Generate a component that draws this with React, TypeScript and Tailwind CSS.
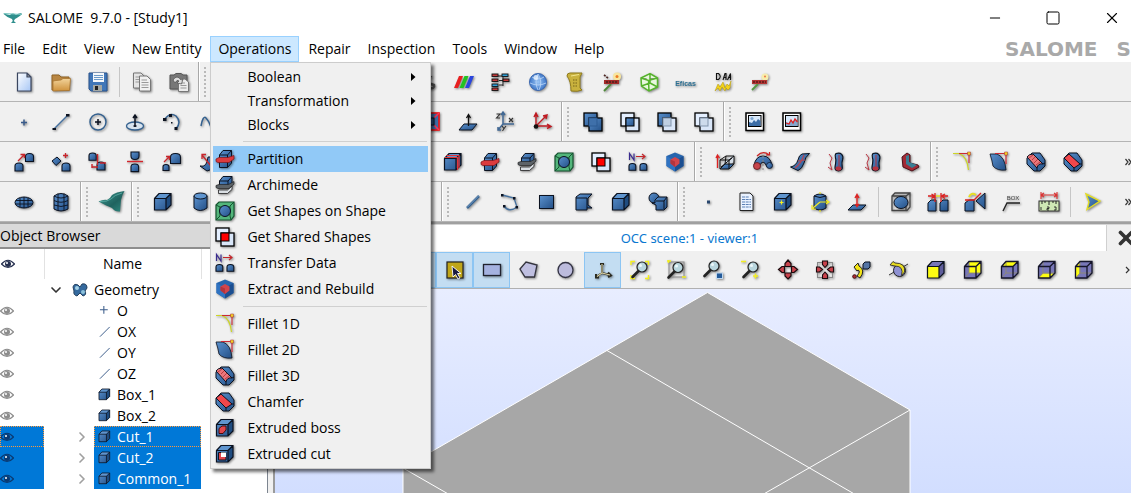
import type { ReactNode } from "react";
import { ChevronDown, ChevronRight, Minus, Square, X } from "lucide-react";

const BLUE = "url(#blue)";
const K = "#0b1220";

function Glass({ x = 12, y = 7 }: { x?: number; y?: number }) {
  return (
    <>
      <path d={`M${x - 3.5} ${y + 4}L${x - 9.5} ${y + 10}`} stroke="#222" strokeWidth="2.6" strokeLinecap="round" />
      <circle cx={x} cy={y} r="5" fill="#b9d6de" stroke="#222" strokeWidth="1.2" />
      <circle cx={x - 1.5} cy={y - 1.5} r="1.5" fill="#eef8fa" />
    </>
  );
}

function Cube({ front = BLUE, top = "#5f95cf", side = "#1f4c80" }: { front?: string; top?: string; side?: string }) {
  return (
    <>
      <path d="M1.5 6.5L6 1.5H18V13L13 18H1.5Z" fill={front} />
      <path d="M1.5 6.5L6 1.5H18L13 6.5Z" fill={top} />
      <path d="M13 6.5L18 1.5V13L13 18Z" fill={side} />
      <path d="M1.5 6.5L6 1.5H18V13L13 18H1.5ZM1.5 6.5H13V18M13 6.5L18 1.5" fill="none" stroke={K} strokeWidth="1.2" />
    </>
  );
}

function Wire({ children }: { children: ReactNode }) {
  return (
    <>
      <path d="M1.5 6.5L6 1.5H18V13L13 18H1.5Z" fill="#7877b8" />
      {children}
      <path d="M6 1.5V13H18M6 13L1.5 18" fill="none" stroke="#8f8b70" strokeWidth=".9" />
      <path d="M1.5 6.5L6 1.5H18V13L13 18H1.5ZM1.5 6.5H13V18M13 6.5L18 1.5" fill="none" stroke="#15152a" strokeWidth="1.3" />
    </>
  );
}

function Squares({ back, front, mid, rim }: { back: string; front: string; mid: string; rim: string }) {
  return (
    <>
      <rect x="1" y="1" width="13" height="13" fill={back} stroke="#000" strokeWidth="1.3" />
      <rect x="6" y="6" width="13" height="13" fill={front} stroke="#000" strokeWidth="1.3" />
      <rect x="6" y="6" width="8" height="8" fill={mid} stroke={rim} strokeWidth="1" />
    </>
  );
}

function Knob({ x, y, s = 1 }: { x: number; y: number; s?: number }) {
  return <path d={`M${x} ${y + 8 * s}V${y + 3 * s}Q${x} ${y} ${x + 4 * s} ${y}Q${x + 8 * s} ${y} ${x + 8 * s} ${y + 3 * s}V${y + 8 * s}Z`} fill={BLUE} stroke={K} strokeWidth="1.1" />;
}

function Pipe() {
  return (
    <>
      <path d="M9 1.5C14 0 17 3 15.500 8C14 12 16 14 15 17C13 20 8 19 8 16C8 12 10 9 8.500 6Q7.500 3 9 1.500Z" fill={BLUE} stroke={K} strokeWidth="1.2" />
      <ellipse cx="11.500" cy="16.500" rx="2.900" ry="2.200" fill="#b83340" />
      <path d="M12 3V14M2 2L5 6L3 11L5 18M1 15L5 18" stroke="#b83340" fill="none" />
    </>
  );
}

const icons: Record<string, ReactNode> = {
  new: <path d="M3.500 1H13L17 5V19H3.500ZM13 1V5H17" fill="url(#page)" stroke="#3a4660" strokeWidth="1.200" />,
  open: (
    <>
      <path d="M1 3H8L10 5H18V18H1Z" fill="#b88642" stroke="#8f6325" />
      <path d="M2 19V9L5 8.500L10 8L12 6.500H19.500L18.500 18.500Z" fill="url(#folder)" stroke="#a87530" strokeWidth=".8" />
    </>
  ),
  save: (
    <>
      <path d="M1 1H19V19H3L1 17Z" fill="#4177b8" stroke="#28538c" />
      <path d="M5 1H16V10H5Z" fill="#f5f8fb" />
      <path d="M6 3.500H15M6 5.500H15M6 7.500H15" stroke="#6c9ac8" />
      <path d="M5 13H14V19H5Z" fill="#a4a8a4" />
      <path d="M7 14H10V18H7Z" fill="#222" />
    </>
  ),
  copy: (
    <>
      <path d="M1.500 1H9L12 4V16H1.500Z" fill="#e4e4e4" stroke="#777" />
      <path d="M3.500 5H8M3.500 7.500H7M3.500 10H7" stroke="#999" />
      <path d="M7.500 4H15L18.500 7.500V19H7.500Z" fill="#f1f1f1" stroke="#777" />
      <path d="M9.500 8H15M9.500 10.500H16.500M9.500 13H16.500M9.500 15.500H16.500" stroke="#999" />
    </>
  ),
  paste: (
    <>
      <path d="M1 3H5L7 1.500H12L14 3H18V17H1Z" fill="#777" stroke="#555" />
      <path d="M9.500 7H16L19.500 10V19.500H9.500Z" fill="#ececec" stroke="#777" />
      <path d="M11.500 11H16M11.500 13.500H17.500M11.500 16H17.500" stroke="#999" />
      <path d="M4 8Q8 2 12 8L14 7L12.500 12L8 11L10 9Q8 7 6 11Z" fill="#ddd" stroke="#555" strokeWidth=".8" />
    </>
  ),
  dots: <path d="M5 3L13 5L8 10L17 13Q18 17 12 16" fill="none" stroke="#555" strokeWidth="2.500" />,
  rgb: (
    <>
      <path d="M5 4H9L4 16H0Z" fill="#e82020" />
      <path d="M10.500 4H14.500L9.500 16H5.500Z" fill="#21c321" />
      <path d="M16 4H20L15 16H11Z" fill="#2a45dd" />
    </>
  ),
  blocks: (
    <>
      <path d="M7 4H12V14M8 8.500H12M8 13H12" stroke="#222" fill="none" />
      {[[1, 2, 0], [11, 2, 1], [1, 7, 0], [12, 7, 0], [1, 12, 1], [1, 16, 0]].map(([x, y, b]) => (
        <rect key={`${x}-${y}`} x={x} y={y} width="6" height="2.5" fill={b ? "#2f9fd8" : "#c43a3a"} stroke="#111" strokeWidth=".9" />
      ))}
    </>
  ),
  globe: (
    <>
      <circle cx="10" cy="10" r="8.500" fill="url(#globe)" stroke="#3c68b0" />
      <path d="M4 5Q10 9 16 5M2 11Q10 15 18 11M10 2Q6 10 10 18M10 2Q15 10 11 18" stroke="#bcd7f7" fill="none" strokeWidth=".8" />
      <circle cx="8" cy="5.500" r="2.500" fill="#eaf4ff" opacity=".8" />
    </>
  ),
  scroll: (
    <>
      <path d="M2 4Q2 1 5 1H17L15 5V16L17 18Q13 20 6 19Q6 9 2 4Z" fill="#c9b23e" stroke="#8f7a1c" />
      <path d="M6 4L14 2.500" stroke="#f1e58c" />
      <path d="M8 8H13M8 11H13M8 14H13" stroke="#77651a" strokeDasharray="1.500 1" />
    </>
  ),
  yacs: (
    <>
      <path d="M2 19L9 12" stroke="#4e8a3a" strokeWidth="2" />
      <circle cx="15" cy="4.500" r="4" fill="#f8e6a0" />
      <circle cx="15" cy="4.500" r="1.500" fill="#ee7c26" />
      <path d="M2 8H17V12H2Z" fill="#a32a28" />
      <path d="M2 3L6 6M4 10H15" stroke="#4a2320" strokeDasharray="2 1" strokeWidth="1.600" />
    </>
  ),
  hexa: <path d="M2 6L11 1.500L18.500 6V15L10 19L2.500 14ZM2 6L9.500 8.500L18.500 6M9.500 8.500L10 19M11 1.500V11L2.500 14M11 11L18.500 15" fill="#e9f7df" stroke="#56b32c" strokeWidth="1.500" />,
  eficas: (
    <text x="9.5" y="14" textAnchor="middle" fill="#2b6f92" className="font-['Liberation_Sans_Narrow','Liberation_Sans',sans-serif] text-[7px] font-bold">
      Eficas
    </text>
  ),
  da: (
    <>
      <path d="M3.500 1.500H5.500Q9 4.500 5.500 7.500H3.500ZM10 8L12 1.500H13V8M10.500 5.500H13M14.500 8L17.500 1.500V8M15.500 5.500H17.500" fill="none" stroke="#111" strokeWidth="1.100" />
      <path d="M2 19L5 12L7 15L10 10L12 16L14 12L16 14L18 9L17 16L15 18L13 16L12 19L9 15L7 19L5 16Z" fill="#f3d21b" stroke="#b59a08" strokeWidth=".5" />
    </>
  ),
  adao: (
    <>
      <path d="M2 18L8 12" stroke="#559a44" strokeWidth="2" />
      <circle cx="15" cy="5" r="3.500" fill="#f7edac" />
      <circle cx="15" cy="4.500" r="1" fill="#e74" />
      <path d="M2 8H17V12H2Z" fill="#b23432" />
      <path d="M3 10H16" stroke="#5a1b1a" strokeWidth="1.500" strokeDasharray="2 1" />
    </>
  ),
  point: <path d="M10 7.500V13.500M7 10.500H13" stroke="#395b8b" strokeWidth="1.500" />,
  line: (
    <>
      <path d="M3 17L17 3" stroke="#44709f" strokeWidth="1.500" />
      <path d="M1.500 16H5V18H1.500ZM15 2H18.500V4.500H15Z" fill={K} />
    </>
  ),
  circle: (
    <>
      <circle cx="10" cy="10" r="8" fill="none" stroke="#33608f" strokeWidth="1.500" />
      <path d="M10 7V13M7 10H13" stroke={K} strokeWidth="1.500" />
    </>
  ),
  ellipse: (
    <>
      <ellipse cx="10" cy="14" rx="8.500" ry="4" fill="#d7e3ef" stroke="#33608f" strokeWidth="1.300" />
      <path d="M10 15V3M8 6L10 3L12 6M8.500 14H11.500" fill="none" stroke={K} strokeWidth="1.500" />
    </>
  ),
  arc: (
    <>
      <path d="M3 7Q8 0 14 4Q20 10 14 17" fill="none" stroke="#33608f" strokeWidth="1.500" />
      <path d="M1 6H4.500V9H1ZM7 2H10V5H7ZM12.500 15H15.500V18H12.500ZM9 10H10.500V11.500H9Z" fill={K} />
    </>
  ),
  curve: <path d="M2 14Q4 3 7 6T12 15Q16 18 18 3" fill="none" stroke="#33608f" strokeWidth="1.500" />,
  redbox: (
    <>
      <rect x="1" y="1" width="17" height="17" fill="#3e6fa8" stroke="#e11" strokeWidth="1.600" />
      <path d="M1 1L6 6M18 1L13 6M1 18L6 13M18 18L13 13" stroke="#f35" strokeWidth="1.500" />
      <rect x="6" y="6" width="7" height="7" fill="#2d588a" stroke={K} />
    </>
  ),
  plane: (
    <>
      <path d="M1 18L6 12H19L14 18Z" fill={BLUE} stroke={K} />
      <path d="M10.500 14V3M8.500 6L10.500 2.500L12.500 6" fill="none" stroke="#111" strokeWidth="1.300" />
    </>
  ),
  axes: (
    <>
      <path d="M8 12V1M8 12H19M8 12L3 18M6 3L8 0L10 3M3 15L3 18H6" fill="none" stroke="#416894" strokeWidth="1.500" />
      <path d="M1.500 2H5L1.500 6H5M14 6L18 10M18 6L14 10M7 14L9 16.500L11 14M9 16.500L7.500 19" fill="none" stroke="#333" strokeWidth="1.100" />
    </>
  ),
  redaxes: (
    <>
      <path d="M4 14V2M4 14L14 4M4 14H18M2 5L4 1L6 5M11 4L15 3L14 7M15 12L19 14.500L15 16.500" fill="none" stroke="#c01820" strokeWidth="1.400" />
      <circle cx="4" cy="14.500" r="2.300" fill="#111" />
    </>
  ),
  fuse: <Squares back={BLUE} front={BLUE} mid="#3f70aa" rim="#2c5a92" />,
  common: <Squares back="#e4efff" front="#d9e6f8" mid={BLUE} rim="#000" />,
  cut: <Squares back={BLUE} front="#d9e6f8" mid="#bfcfe2" rim="#8295ad" />,
  section: <Squares back="#e4efff" front="#d9e6f8" mid="#cddbec" rim="#8295ad" />,
  shared: <Squares back="#e4efff" front="#d9e6f8" mid="#f00" rim="#000" />,
  image: (
    <>
      <rect x="1" y="1" width="17.500" height="17.500" fill="#fff" stroke="#000" strokeWidth="1.500" />
      <rect x="3.500" y="3.500" width="12.500" height="11" fill="#d7e8fa" stroke="#000" />
      <path d="M4 14V10L7 11L9 8L11 10L13 7L15.500 9V14Z" fill="#3c6da6" />
      <circle cx="7" cy="6.500" r="1.600" fill="#7ea6d0" />
    </>
  ),
  imagered: (
    <>
      <rect x="1" y="1" width="17.500" height="17.500" fill="#fff" stroke="#000" strokeWidth="1.500" />
      <rect x="3.500" y="3.500" width="12.500" height="11" fill="#d7e8fa" stroke="#000" />
      <path d="M4 14V10L7 11L9 8L11 10L13 7L15.500 9V14Z" fill="#84a7cd" />
      <path d="M4 11L7 12L9 8L11 11L13 7L15.500 10" fill="none" stroke="#d22" strokeWidth="1.300" />
    </>
  ),
  translate: (
    <>
      <Knob x={1} y={11} />
      <Knob x={11.5} y={1.5} />
      <path d="M4 9L10 3M6.500 2.500H10.500V6" fill="none" stroke="#c9252b" strokeWidth="1.300" />
    </>
  ),
  rotate: (
    <>
      <path d="M1 9L6 5L10 9L5 13.500Z" fill={BLUE} stroke={K} />
      <Knob x={11} y={11} />
      <path d="M14.500 1V6M12 3.500H17" stroke="#c9252b" strokeWidth="1.300" />
    </>
  ),
  location: (
    <>
      <Knob x={1} y={1} s={0.9} />
      <Knob x={9} y={10} />
      <path d="M9.500 2V13M4 15H10M12 11L18 11M4 12V16" fill="none" stroke="#c9252b" strokeWidth="1.400" />
    </>
  ),
  mirror: (
    <>
      <path d="M6 0H14V4Q14 7.500 10 7.500Q6 7.500 6 4Z" fill={BLUE} stroke={K} strokeWidth="1.100" />
      <Knob x={6} y={12} s={0.95} />
      <path d="M2 9.500H18" stroke="#d3242b" strokeWidth="1.400" />
    </>
  ),
  scale: (
    <>
      <Knob x={1} y={12.5} s={0.75} />
      <Knob x={8.5} y={1.5} s={1.25} />
      <path d="M2 10L7 5M4 4.500H7.500V8" fill="none" stroke="#c9252b" strokeWidth="1.300" />
    </>
  ),
  offset: (
    <>
      <path d="M1 14Q8 16 9 5H18L16 16L8 19Z" fill={BLUE} stroke={K} />
      <path d="M12 14L3 3M3 7V2.500H7" fill="none" stroke="#c9252b" strokeWidth="1.300" />
    </>
  ),
  explode: (
    <>
      <Cube />
      <path d="M2 5.500H14.500V18M3.500 3.500H16V16" fill="none" stroke="#e2343a" strokeWidth="1.200" />
    </>
  ),
  partition: (
    <>
      <path d="M4.500 6L8 1.500H16.500V14L12.500 18.500H4.500Z" fill={BLUE} stroke={K} />
      <path d="M4.500 6H12.500L16.500 1.500M12.500 6V18.500" fill="none" stroke={K} />
      <path d="M1 10L4 8.500H13L19 6.500V10L14 13.500H3L1 12.500Z" fill="#dc3b3e" stroke="#7c1418" strokeWidth=".7" />
    </>
  ),
  archimede: (
    <>
      <path d="M3.500 15H12.500L17 11V14.500L12.500 18.500H3.500Z" fill="#d9dee3" stroke="#222" strokeWidth=".8" />
      <path d="M4.500 6L8 1.500H17V9L13 12H4.500Z" fill={BLUE} stroke={K} />
      <path d="M4.500 6H13L17 1.500M13 6V12" fill="none" stroke={K} />
      <path d="M1 10.500L4 9.500H13.500L19 6.500V9L14 13.500H3L1 12.500Z" fill="#5d6368" stroke="#222" strokeWidth=".7" />
    </>
  ),
  onshape: (
    <>
      <path d="M1 4L4 1H19V15L16 19H1Z" fill="#53b57b" stroke="#14532f" strokeWidth="1.200" />
      <path d="M1 4L5 6V15L1 19M19 1L15 5V15L16 19M5 6H15" fill="none" stroke="#14532f" />
      <circle cx="10" cy="10" r="5.500" fill={BLUE} stroke={K} />
    </>
  ),
  transfer: (
    <>
      <path d="M1.500 8V1.500L6 8V1.500" fill="none" stroke="#3a2b8f" strokeWidth="1.200" />
      <path d="M8 4.500H17M14 2L17 4.500L14 7" fill="none" stroke="#c4262b" strokeWidth="1.200" />
      <Knob x={1} y={11.5} s={0.85} />
      <Knob x={12} y={11.5} s={0.85} />
    </>
  ),
  extract: (
    <>
      <path d="M10 0.500L18.500 4V14L10 19.500L1.500 14V4Z" fill="#2765ae" />
      <path d="M10 9V19.500L1.500 14V4Z" fill="#2f73c2" />
      <path d="M10 9V19.500L18.500 14V4Z" fill="#1c4f91" />
      <path d="M10 5L14.500 7.500V11.500L10 15L5.500 11.500V7.500Z" fill="#d2454c" />
      <path d="M10 9.500V15L5.500 11.500V7.500Z" fill="#b3343d" />
    </>
  ),
  extrude: (
    <>
      <path d="M4 16L8 10L18 2V9L12 17Z" fill="#d3dce6" />
      <path d="M4 17L9 12H18L13 17Z" fill={BLUE} stroke="#111" />
      <path d="M4 17V8L10 4H18V12M4 8H13V17M13 8L18 4M9 12L10 4M5 15L16 6" fill="none" stroke="#111" />
      <path d="M1.500 16V4M0 6L1.500 3L3.500 6" fill="none" stroke="#d22" strokeWidth="1.300" />
    </>
  ),
  revolve: (
    <>
      <path d="M1 13Q3 4 10 4Q17 4 19 13L14 15Q12 10 10 10Q8 10 6 15Z" fill={BLUE} stroke={K} />
      <circle cx="4" cy="14" r="3.500" fill="#c6454c" stroke="#5b1519" strokeWidth=".8" />
      <circle cx="16.500" cy="13.500" r="3" fill={BLUE} stroke={K} strokeWidth=".8" />
      <path d="M4 4Q10-2 16 3M13 3H16.500V0" fill="none" stroke="#c22" strokeWidth="1.200" />
      <path d="M10 4V19" stroke="#888" strokeDasharray="2 2" />
    </>
  ),
  sweep: (
    <>
      <path d="M0.500 15Q6 14 8 8Q9 3 12 2L19.500 1.500Q15 5 14 11Q12 17 8 18.500Z" fill={BLUE} stroke={K} />
      <path d="M5 16Q11 12 14 3M8 9L15 8" fill="none" stroke="#b64553" strokeWidth="1.200" />
    </>
  ),
  pipe: <Pipe />,
  pipe2: <Pipe />,
  thick: (
    <>
      <path d="M1 5L6 1L9 3V11L17 13L18 15L11 19L2 15Z" fill="#a32a36" stroke="#4d1018" />
      <path d="M5 4L8 3V10L16 13L11 16L5 12Z" fill="#3a7e94" />
    </>
  ),
  fillet1: (
    <>
      <path d="M1 1.500H7Q15 4 16.500 18" fill="none" stroke="#cdd626" strokeWidth="1.200" />
      <path d="M7 1.500H17V11" fill="none" stroke="#cc2a35" strokeWidth="1.100" />
      <path d="M15.500 0H18.500V3H15.500Z" fill="#f2cf24" stroke="#a33" strokeWidth=".5" />
    </>
  ),
  fillet2: (
    <>
      <path d="M1 2H8Q16 5 17 18Q8 19 4 14Q3 8 1 2Z" fill={BLUE} stroke={K} strokeWidth=".8" />
      <path d="M6 1.500H17V12" fill="none" stroke="#cc2a35" strokeWidth="1.200" />
      <path d="M15.500 0H18.500V3H15.500Z" fill="#f2cf24" stroke="#a33" strokeWidth=".5" />
    </>
  ),
  fillet3: (
    <>
      <path d="M1 6L6 1H14L19 8V14L14 19H8L1 12Z" fill={BLUE} stroke={K} />
      <path d="M1 5Q3 2 7 2L17 12Q12 11 11 16Z" fill="#ea777b" stroke={K} />
      <path d="M3 6L7 3M6 8L9 5M8 11L12 7M10 13L14 10" stroke="#b93b42" />
      <path d="M11 16V19M17 12L19 11" stroke={K} />
    </>
  ),
  chamfer: (
    <>
      <path d="M1 6L6 1H14L19 8V14L14 19H8L1 12Z" fill={BLUE} stroke={K} />
      <path d="M1 6L6 2L17 12L11 16Z" fill="#f0474c" stroke={K} />
      <path d="M11 16V19M17 12H19" stroke={K} />
    </>
  ),
  quad: (
    <>
      <ellipse cx="10" cy="10.500" rx="9" ry="5.500" fill={BLUE} stroke={K} />
      <path d="M2 8.500H18M1 12H19M6 6V15M10 5V16M14 6V15" stroke={K} strokeWidth=".9" />
    </>
  ),
  barrel: (
    <>
      <path d="M3 4Q10-1 17 4V17Q10 21 3 17Z" fill={BLUE} stroke={K} />
      <path d="M3 4Q10 8 17 4M3 8.500Q10 12 17 8.500M3 13Q10 16 17 13M7 1.500V19M13 1.500V19" fill="none" stroke={K} strokeWidth=".9" />
    </>
  ),
  box: <Cube />,
  cylinder: (
    <>
      <path d="M4 4V16Q10 21 17 16V4Z" fill={BLUE} stroke={K} />
      <ellipse cx="10.500" cy="4" rx="6.500" ry="3" fill="#5f95cf" stroke={K} />
    </>
  ),
  edge: (
    <>
      <path d="M4 16L16 4" stroke="#33608f" strokeWidth="2.500" />
      <path d="M4 15.500L15.500 4" stroke="#8fb1d4" strokeWidth=".8" />
    </>
  ),
  wire: (
    <>
      <path d="M2 3L14 6L17 15Q9 21 4 14" fill="none" stroke="#44709f" strokeWidth="1.300" />
      <path d="M1 2H3.500V4.500H1ZM13 5H15.500V7.500H13ZM15.500 14H18V16.500H15.500ZM3 13H5.500V15.500H3Z" fill={K} />
    </>
  ),
  face: <rect x="2.500" y="3.500" width="14" height="13" fill={BLUE} stroke={K} />,
  shell: (
    <>
      <path d="M2 5L6 2H18L14 6V13L18 16H13V18H2Z" fill={BLUE} stroke={K} />
      <path d="M2 6H13V16" fill="none" stroke={K} />
    </>
  ),
  compound: (
    <>
      <circle cx="6" cy="6" r="5" fill={BLUE} stroke={K} />
      <path d="M7 8L10 5H19V15L16 18H8V13L4 11H7Z" fill={BLUE} stroke={K} />
      <path d="M8 9H16V17M16 9L19 5" fill="none" stroke={K} />
    </>
  ),
  dot: <rect x="8" y="8.500" width="3" height="3" fill="#28476e" />,
  doc: (
    <>
      <path d="M4 1H14L17 4V18.500H4Z" fill="#eaf2ff" stroke="#222" />
      <path d="M6 5H13M6 7.500H15M6 10H15M6 12.500H15M6 15H15" stroke="#5b80b5" strokeDasharray="3 .700" />
    </>
  ),
  boxctr: (
    <>
      <Cube />
      <path d="M8.500 8.500V12.500M6.500 10.500H10.500" stroke="#f5ef1c" strokeWidth="1.200" />
    </>
  ),
  inertia: (
    <>
      <path d="M4 4V16Q10 20 16 16V4Q10 0 4 4Z" fill={BLUE} stroke={K} />
      <path d="M4 4Q10 7 16 4" fill="none" stroke={K} />
      <path d="M10 10H19M10 10L3 16M10 0V2M10 18V20M16 8L19 10L16 12M2 13V17H6" fill="none" stroke="#f1ec24" strokeWidth="1.200" />
    </>
  ),
  normal: (
    <>
      <path d="M1 18L6 13H19L14 18Z" fill={BLUE} stroke={K} />
      <path d="M10 15V3M8 6L10 2.500L12 6M8.500 12L10 14.500L12 12" fill="none" stroke="#d22" strokeWidth="1.400" />
    </>
  ),
  bbox: (
    <>
      <path d="M1 4L4 1H19V15L16 18.500H1ZM1 4H15V18M15 4L19 1" fill="none" stroke="#444" strokeWidth="1.300" />
      <ellipse cx="10" cy="10.500" rx="7" ry="6" fill={BLUE} stroke={K} />
    </>
  ),
  mindist: (
    <>
      <path d="M0 11L3 8H8V19H0ZM12 11L15 8H20V19H12Z" fill={BLUE} stroke={K} />
      <path d="M8 4H12" stroke="#e8df26" strokeWidth="1.500" />
      <path d="M0 4H6M3.500 2L6.500 4L3.500 6.500M20 4H14M17 2L13.500 4L17 6.500M7 1V10M13 1V10" fill="none" stroke="#d22" strokeWidth="1.300" />
    </>
  ),
  angle: (
    <>
      <path d="M0 11L4 8H9V19H0ZM20 1V17L11 9Z" fill={BLUE} stroke={K} />
      <path d="M4 5Q6 0 11 3" fill="none" stroke="#e8df26" strokeWidth="2" />
      <path d="M0 8H9L16 1" fill="none" stroke="#d22" strokeWidth="1.300" />
    </>
  ),
  annot: (
    <>
      <path d="M1 19L5 11H18" fill="none" stroke="#222" strokeWidth="1.400" />
      <text x="11" y="8" textAnchor="middle" fill="#444" className="font-['Liberation_Sans',sans-serif] text-[6px]">
        BOX
      </text>
    </>
  ),
  ruler: (
    <>
      <rect x="0" y="9" width="20" height="10" fill="#cfe8b4" stroke="#333" />
      <path d="M3 9V12M6 9V11M10 9V13M14 9V11M17 9V12" stroke="#222" />
      <path d="M2 15V18M8 15H10V16.500H8V18H10M15 15H17V18H15" fill="none" stroke="#222" strokeWidth=".9" />
      <path d="M2 0V7M18 0V7M2 3H18M5 1L2 3L5 5M15 1L18 3L15 5" fill="none" stroke="#d33" strokeWidth="1.100" />
    </>
  ),
  field: <path d="M3 2L17 9L4 17.500L6 10Z" fill={BLUE} stroke="#e3dc25" strokeWidth="1.400" />,
  smooth: (
    <>
      <path d="M-3.500 9.500Q2 7 5 8Q8 7 10 3Q14 0 22.500-1Q20 3 19 8Q18.500 14 18 19.500Q13 20 10 16Q5 14-3.500 9.500Z" fill="url(#teal)" />
      <path d="M-2 9.500Q5 10 9 7Q12 3 20 1" fill="none" stroke="#5fb3a9" strokeWidth=".8" />
    </>
  ),
  select: (
    <>
      <rect x="2" y="2" width="16" height="16" fill="#c0a618" stroke="#222" strokeWidth="1.200" />
      <path d="M7 6L8 17L10.500 14.500L13 19L15 18L12.500 13.500H16Z" fill="#1a1a40" stroke="#fff" strokeWidth=".9" />
    </>
  ),
  rect: <rect x="1.500" y="4.500" width="17" height="11" fill="#a5b2e0" stroke="#20222e" strokeWidth="1.300" />,
  poly: <path d="M1 9L7 2L18 5L15.500 17L6 17Z" fill="#bfbfe0" stroke="#33333d" strokeWidth="1.300" />,
  circ: <circle cx="9.500" cy="10" r="7.500" fill="#bcbbdd" stroke="#333344" strokeWidth="1.300" />,
  trihedron: (
    <>
      <path d="M9 3V13L3 17M9 13L17 15M7 4H11M3 14V17.500H6M15 12.500L18 15.500L15 17" fill="none" stroke="#2a2a20" strokeWidth="2" />
      <path d="M9 4V13L4 16.500M9 13L17 15" fill="none" stroke="#ddd5a8" strokeWidth="1.100" />
    </>
  ),
  fit: (
    <>
      <path d="M1 5V1.500H5M15 1.500H18.500V5M18.500 15V18.500H15M5 18.500H1V15" fill="none" stroke="#f7f21a" strokeWidth="1.400" />
      <Glass />
    </>
  ),
  fitarea: (
    <>
      <rect x="2" y="2" width="15" height="15" fill="none" stroke="#888" />
      <path d="M0 1H4M1.500 0V3M15 17H19" stroke="#f2ee21" strokeWidth="1.400" />
      <Glass x={11} y={7.5} />
    </>
  ),
  fitsel: (
    <>
      <rect x="12.500" y="13" width="6" height="5.500" fill="#245b9a" stroke="#bfd7ee" />
      <Glass x={10} y={6} />
    </>
  ),
  zoom: (
    <>
      <path d="M0 1.500H5M12 16H17M14.500 13.500V18.500" stroke="#f2ee21" strokeWidth="1.500" />
      <Glass x={12} y={7} />
    </>
  ),
  pan: (
    <path d="M10 0L13 3.500V6.500H7V3.500ZM10 19L13 16V13H7V16ZM0.500 9.500L4 6.500H6.500V12.500H4ZM19.500 9.500L16 6.500H13.500V12.500H16Z" fill="#c8434c" stroke="#1b0b0e" strokeWidth="1.200" />
  ),
  gpan: (
    <>
      <rect x="2.500" y="2.500" width="15" height="15" fill="none" stroke="#888" />
      <path d="M10 7.500L12.500 4.500V1H7.500V4.500ZM10 12L12.500 15V18.500H7.500V15ZM7.500 9.500L4.500 7H1.500V12H4.500ZM12.500 9.500L15.500 7H18.500V12H15.500Z" fill="#c8434c" stroke="#1b0b0e" strokeWidth="1.100" />
    </>
  ),
  rotpt: (
    <>
      <path d="M11 4L13 2L18 2V7L16 9H11Z" fill="#5575a5" stroke={K} />
      <path d="M2 7L6 3L7 6Q14 10 8 18L5 16Q9 11 6 10L5 11Z" fill="#f4e516" stroke="#222" />
      <circle cx="2.500" cy="16.500" r="1.800" fill="#b22b33" stroke="#411" />
    </>
  ),
  spin: (
    <>
      <path d="M0 15L19 4" stroke="#333" />
      <circle cx="10.500" cy="10.500" r="6" fill="#8e91d2" stroke="#222" />
      <path d="M1 5L4 1.500L6 3Q17 3 15.500 12L12.500 15.500Q15 6 6 6Z" fill="#e8dc22" stroke="#222" strokeWidth=".8" />
    </>
  ),
  front: <Cube front="#fdfd12" top="#7877b8" side="#5f5e9c" />,
  back: (
    <Wire>
      <path d="M6 1.500H18V13H6Z" fill="#fdfd12" />
    </Wire>
  ),
  top: (
    <Wire>
      <path d="M1.500 6.500L6 1.500H18L13 6.500Z" fill="#fdfd12" />
    </Wire>
  ),
  bottom: (
    <Wire>
      <path d="M1.500 18L6 13.500H17L13 18Z" fill="#fdfd12" />
    </Wire>
  ),
  left: (
    <Wire>
      <path d="M1.500 6.500L5.500 2V14L1.500 18Z" fill="#fdfd12" />
    </Wire>
  ),
  boss: (
    <>
      <Cube />
      <path d="M4 10.500L7 8H11V12L8 15.500H4Z" fill="#e0474d" stroke="#400" strokeWidth=".9" />
    </>
  ),
  excut: (
    <>
      <Cube />
      <path d="M3.500 8.500H11V16H3.500Z" fill="#e0474d" stroke={K} />
      <path d="M6 8.500H11V13H6Z" fill="#fff" />
    </>
  ),
};

function Icon({ name }: { name: string }) {
  return (
    <svg viewBox="0 0 20 20" aria-hidden="true" className="size-5 shrink-0 overflow-visible drop-shadow-[1px_1px_1px_rgba(0,0,0,0.45)]">
      {icons[name]}
    </svg>
  );
}

function More({ double = false }: { double?: boolean }) {
  return (
    <button type="button" aria-label="More" className="ml-auto flex w-1.5 shrink-0 items-center">
      <svg viewBox="0 0 6 8" className="h-2 w-1.5" fill="none" stroke="#333" strokeWidth="1.2">
        <path d={double ? "M0.500 1L3 4L0.500 7M3.500 1L6 4L3.500 7" : "M1 1L4 4L1 7"} />
      </svg>
    </button>
  );
}

/* Toolbar entries: an icon name, "|" separator, "#" handle of the next toolbar, or the width of a free stretch. */
type Entry = string | number;

const toolbars: Entry[][] = [
  ["new", "open", "save", "|", "copy", "paste", "#", 197, "dots", "rgb", "blocks", "globe", "scroll", "yacs", "hexa", "eficas", "da", "adao"],
  ["point", "line", "circle", "ellipse", "arc", "curve", 185, "redbox", "plane", "axes", "redaxes", "#", "fuse", "common", "cut", "section", "#", "image", "imagered"],
  ["translate", "rotate", "location", "mirror", "scale", "offset", 207, "explode", "partition", "archimede", "onshape", "shared", "transfer", "extract", "#", "extrude", "revolve", "sweep", "pipe", "pipe2", "thick", "#", "fillet1", "fillet2", "fillet3", "chamfer", ">"],
  ["quad", "barrel", "#", "smooth", "#", "box", "cylinder", 222, "#", "edge", "wire", "face", "shell", "box", "compound", "#", "dot", "doc", "boxctr", "inertia", "normal", "|", "bbox", "mindist", "angle", "annot", "ruler", "|", "field", ">"],
];

const viewTools = ["select", "rect", "poly", "circ", "trihedron", "fit", "fitarea", "fitsel", "zoom", "pan", "gpan", "rotpt", "spin", "front", "back", "top", "bottom", "left"];
const pressed = ["select", "rect", "trihedron"];

function Toolbar({ entries }: { entries: Entry[] }) {
  return (
    <div role="toolbar" className="flex h-10 items-stretch overflow-hidden border-b border-[#b4b4b4] bg-[#f0f0f0] pl-[5px]">
      {entries.map((e, i) => {
        if (typeof e === "number") return <span key={i} className="shrink-0" style={{ width: e }} />;
        if (e === "|")
          return (
            <span key={i} className="flex w-[7px] shrink-0 items-center justify-center">
              <span className="h-[30px] w-px bg-[#c6c6c6]" />
            </span>
          );
        if (e === "#")
          return (
            <span key={i} className="flex w-3.5 shrink-0 items-center pl-px">
              <span className="h-full w-0.5 border-l border-[#a8a8a8] bg-white" />
              <span className="ml-1 h-[30px] w-0.5 bg-[repeating-linear-gradient(#b9b9b9_0_2px,transparent_2px_4px)]" />
            </span>
          );
        if (e === ">") return <More key={i} double />;
        return (
          <button key={i} type="button" aria-label={e} className="flex w-[37px] shrink-0 items-center justify-center hover:bg-[#dcebf7]">
            <Icon name={e} />
          </button>
        );
      })}
    </div>
  );
}

const menus = ["File", "Edit", "View", "New Entity", "Operations", "Repair", "Inspection", "Tools", "Window", "Help"];

const submenus = ["Boolean", "Transformation", "Blocks"];
const operations: [string, string][][] = [
  [
    ["Partition", "partition"],
    ["Archimede", "archimede"],
    ["Get Shapes on Shape", "onshape"],
    ["Get Shared Shapes", "shared"],
    ["Transfer Data", "transfer"],
    ["Extract and Rebuild", "extract"],
  ],
  [
    ["Fillet 1D", "fillet1"],
    ["Fillet 2D", "fillet2"],
    ["Fillet 3D", "fillet3"],
    ["Chamfer", "chamfer"],
    ["Extruded boss", "boss"],
    ["Extruded cut", "excut"],
  ],
];

function OperationsMenu() {
  return (
    <div role="menu" className="absolute top-full left-0 z-10 w-[221px] border border-[#cccccc] bg-[#f0f0f0] px-0.5 pt-0.5 pb-px shadow-[3px_3px_3px_rgba(0,0,0,0.55)]">
      {submenus.map((s) => (
        <button key={s} role="menuitem" type="button" className="flex h-6 w-full items-center justify-between pr-3 pl-[34px]">
          {s}
          <svg viewBox="0 0 5 8" className="h-2 w-[5px]">
            <path d="M0 0L4.500 4L0 8Z" />
          </svg>
        </button>
      ))}
      {operations.map((group, g) => (
        <div key={g}>
          <div className="flex h-[9px] items-center pr-px pl-[30px]">
            <span className="h-px w-full bg-[#d0d0d0]" />
          </div>
          {group.map(([label, icon]) => (
            <button key={label} role="menuitem" type="button" className={`flex h-[26px] w-full items-center gap-3 pl-0.5 ${label === "Partition" ? "bg-[#91c9f7]" : ""}`}>
              <Icon name={icon} />
              {label}
            </button>
          ))}
        </div>
      ))}
    </div>
  );
}

function Eye({ tone }: { tone: string }) {
  return (
    <svg viewBox="0 0 14 10" className={`h-2.5 w-3.5 shrink-0 ${tone}`}>
      <path d="M0.500 5Q7-2.500 13.500 5Q7 12 0.500 5Z" fill="none" stroke="currentColor" strokeWidth="1.200" />
      <circle cx="7" cy="5" r="3" fill="currentColor" />
      <circle cx="6" cy="4" r="1" fill="#fff" />
    </svg>
  );
}

type Node = { name: string; kind: "point" | "line" | "box"; selected?: boolean; current?: boolean };
const nodes: Node[] = [
  { name: "O", kind: "point" },
  { name: "OX", kind: "line" },
  { name: "OY", kind: "line" },
  { name: "OZ", kind: "line" },
  { name: "Box_1", kind: "box" },
  { name: "Box_2", kind: "box" },
  { name: "Cut_1", kind: "box", selected: true, current: true },
  { name: "Cut_2", kind: "box", selected: true },
  { name: "Common_1", kind: "box", selected: true },
];

function NodeIcon({ kind }: { kind: Node["kind"] }) {
  return (
    <svg viewBox="0 0 20 20" className="size-[13px] shrink-0">
      {kind === "box" && <Cube />}
      {kind === "line" && <path d="M3 18L18 3" stroke="#3b5c8a" strokeWidth="1.500" />}
      {kind === "point" && <path d="M9 3V15M3 9H15" stroke="#3b5c8a" strokeWidth="1.600" />}
    </svg>
  );
}

function ObjectBrowser() {
  return (
    <section className="w-[268px] shrink-0 border-r border-[#7d8590] bg-white">
      <h2 className="h-[25px] border-b-2 border-[#8e8e8e] bg-[#d9d9d9] leading-[23px]">Object Browser</h2>
      <table className="w-full table-fixed border-collapse">
        <thead>
          <tr className="h-[30px]">
            <th className="w-11 border-r border-[#e2e2e2] p-0 pl-px" aria-label="Visibility">
              <Eye tone="text-[#26304f]" />
            </th>
            <th className="w-[157px] border-r border-[#e2e2e2] p-0 font-normal">Name</th>
            <th className="p-0" aria-label="Value" />
          </tr>
        </thead>
        <tbody>
          <tr className="h-[21px]">
            <td className="p-0" />
            <td className="p-0">
              <div className="flex items-center pl-1">
                <ChevronDown className="size-4 text-[#333]" strokeWidth={2.5} />
                <svg viewBox="0 0 16 14" className="ml-2 h-3.5 w-4">
                  <path d="M1 4Q2 0 6 2L8 4L10 1Q15 0 15 5L13 8Q15 12 11 13L8 10L5 13Q1 12 2 8Z" fill="#356a9e" stroke="#26415e" />
                  <circle cx="5" cy="5" r="2" fill="#a5d2e8" />
                  <circle cx="11" cy="9" r="2" fill="#8cc2dc" />
                </svg>
                <span className="ml-1.5 leading-[21px]">Geometry</span>
              </div>
            </td>
            <td />
          </tr>
          {nodes.map((n) => (
            <tr key={n.name} className="h-[21px]">
              <td className="p-0">
                <div className={`flex h-[21px] items-center outline-1 -outline-offset-1 outline-dotted ${n.selected ? "bg-[#0078d7]" : ""} ${n.current ? "outline-[#ff9a3c]" : "outline-transparent"}`}>
                  <Eye tone={n.selected ? "text-[#0b3a72]" : "text-[#8d8d8d]"} />
                </div>
              </td>
              <td className="p-0">
                <div className="flex h-[21px] items-center">
                  <span className="flex w-[50px] shrink-0 justify-end pr-1">{n.selected && <ChevronRight className="size-4 text-[#a0a0a0]" strokeWidth={2.5} />}</span>
                  <span
                    className={`flex h-[21px] grow items-center gap-1.5 pl-1 outline-1 -outline-offset-1 outline-dotted ${n.selected ? "bg-[#0078d7] text-white" : ""} ${n.current ? "outline-[#ff9a3c]" : "outline-transparent"}`}
                  >
                    <NodeIcon kind={n.kind} />
                    {n.name}
                  </span>
                </div>
              </td>
              <td />
            </tr>
          ))}
        </tbody>
      </table>
    </section>
  );
}

function Viewer() {
  return (
    <section className="flex min-w-0 grow flex-col border-l-2 border-[#9a9a9a]">
      <div className="flex h-[27px] border-t border-[#d5d5d5]">
        <div className="grow border-r border-[#d0d0d0] bg-white pr-0.5 text-center font-['Noto_Sans',sans-serif] text-[13px] leading-[26px] text-[#0a78d0]">OCC scene:1 - viewer:1</div>
        <button type="button" aria-label="Close view" className="w-6 overflow-hidden pl-2">
          <X className="size-[22px] text-[#333]" strokeWidth={4} />
        </button>
      </div>
      <div role="toolbar" className="flex h-[38px] shrink-0 items-center overflow-hidden border-b border-[#b0b0b0] bg-[#f0f0f0] pl-[124px]">
        <span className="h-9 w-[37px] shrink-0 border border-[#8cc5f3] bg-[#c3ddf2]" />
        {viewTools.map((t) => (
          <button key={t} type="button" aria-label={t} className={`flex h-9 w-[37px] shrink-0 items-center justify-center border ${pressed.includes(t) ? "border-[#8cc5f3] bg-[#c3ddf2]" : "border-transparent"}`}>
            <Icon name={t} />
          </button>
        ))}
        <More />
      </div>
      <div className="min-h-0 grow bg-linear-to-b from-[#e8edff] to-[#d2deff]">
        <svg viewBox="0 0 856 204" preserveAspectRatio="xMidYMin slice" className="block h-full w-full">
          <path d="M128 210V179L432.500 3.500L635 121V210Z" fill="#a7a7a7" stroke="#fff" />
          <path d="M128 179L182 210M332 61.500L588 210M635 121L480 210" stroke="#fff" fill="none" />
        </svg>
      </div>
    </section>
  );
}

export default function App() {
  return (
    <div className="flex min-h-screen flex-col overflow-hidden bg-white font-['Open_Sans','Noto_Sans',sans-serif] text-sm leading-5 text-black">
      <svg className="absolute size-0" aria-hidden="true">
        <defs>
          <linearGradient id="blue" x1="0" y1="0" x2="1" y2="1">
            <stop offset="0" stopColor="#5b92cf" />
            <stop offset="1" stopColor="#234f86" />
          </linearGradient>
          <linearGradient id="page" x1="0" y1="0" x2="1" y2="1">
            <stop offset="0" stopColor="#ffffff" />
            <stop offset="1" stopColor="#a6c6f5" />
          </linearGradient>
          <linearGradient id="folder" x1="0" y1="0" x2="0" y2="1">
            <stop offset="0" stopColor="#f2d39a" />
            <stop offset="1" stopColor="#cf923c" />
          </linearGradient>
          <radialGradient id="globe">
            <stop offset="0" stopColor="#9cc6f5" />
            <stop offset="1" stopColor="#3f78c9" />
          </radialGradient>
          <linearGradient id="teal" x1="0" y1="0" x2="1" y2="1">
            <stop offset="0" stopColor="#3f9a92" />
            <stop offset=".6" stopColor="#1f635f" />
            <stop offset="1" stopColor="#2f8a80" />
          </linearGradient>
        </defs>
      </svg>
      <header className="flex h-9 items-center pl-[3px]">
        <svg viewBox="0 0 20 12" className="h-3 w-5" aria-hidden="true">
          <path d="M0 1.500L7 3Q8 1.500 10 1.500Q12 1.500 13 3Q16 0.500 19 1.500L17.500 3.500Q14 6 12 7L10.800 9L13 11H8L9.800 9L9 7Q4 5.500 0 1.500Z" fill="#2f8f8d" />
          <path d="M1 1.500L19 2.500" stroke="#76c4bf" />
        </svg>
        <h1 className="ml-[5px] whitespace-pre">{"SALOME  9.7.0 - [Study1]"}</h1>
        <div className="ml-auto flex h-full">
          <button type="button" aria-label="Minimize" className="flex w-[58px] items-center justify-center">
            <Minus className="size-4" strokeWidth={1.5} />
          </button>
          <button type="button" aria-label="Maximize" className="flex w-[58px] items-center justify-center">
            <Square className="size-4" strokeWidth={1.5} />
          </button>
          <button type="button" aria-label="Close" className="flex w-[49px] items-center justify-center pl-2.5">
            <X className="size-[18px]" strokeWidth={1.5} />
          </button>
        </div>
      </header>
      <nav className="flex h-[26px] gap-px pl-px">
        {menus.map((m) => (
          <div key={m} className={`relative ${m === "File" ? "-ml-1.5" : ""}`}>
            <button type="button" className={`h-[26px] border px-[7px] ${m === "Operations" ? "border-[#99d1ff] bg-[#cce8ff]" : "border-transparent"}`}>
              {m}
            </button>
            {m === "Operations" && <OperationsMenu />}
          </div>
        ))}
        <div className="ml-auto flex w-[126px] items-center justify-between font-['DejaVu_Sans',sans-serif] text-xl leading-4 font-bold text-[#a9a9a9]">
          <span>SALOME</span>
          <span>S</span>
        </div>
      </nav>
      {toolbars.map((t, i) => (
        <Toolbar key={i} entries={t} />
      ))}
      <main className="flex grow items-stretch border-t-2 border-[#a0a0a0] bg-[#f0f0f0]">
        <ObjectBrowser />
        <div className="w-[5px] shrink-0" />
        <Viewer />
      </main>
    </div>
  );
}
